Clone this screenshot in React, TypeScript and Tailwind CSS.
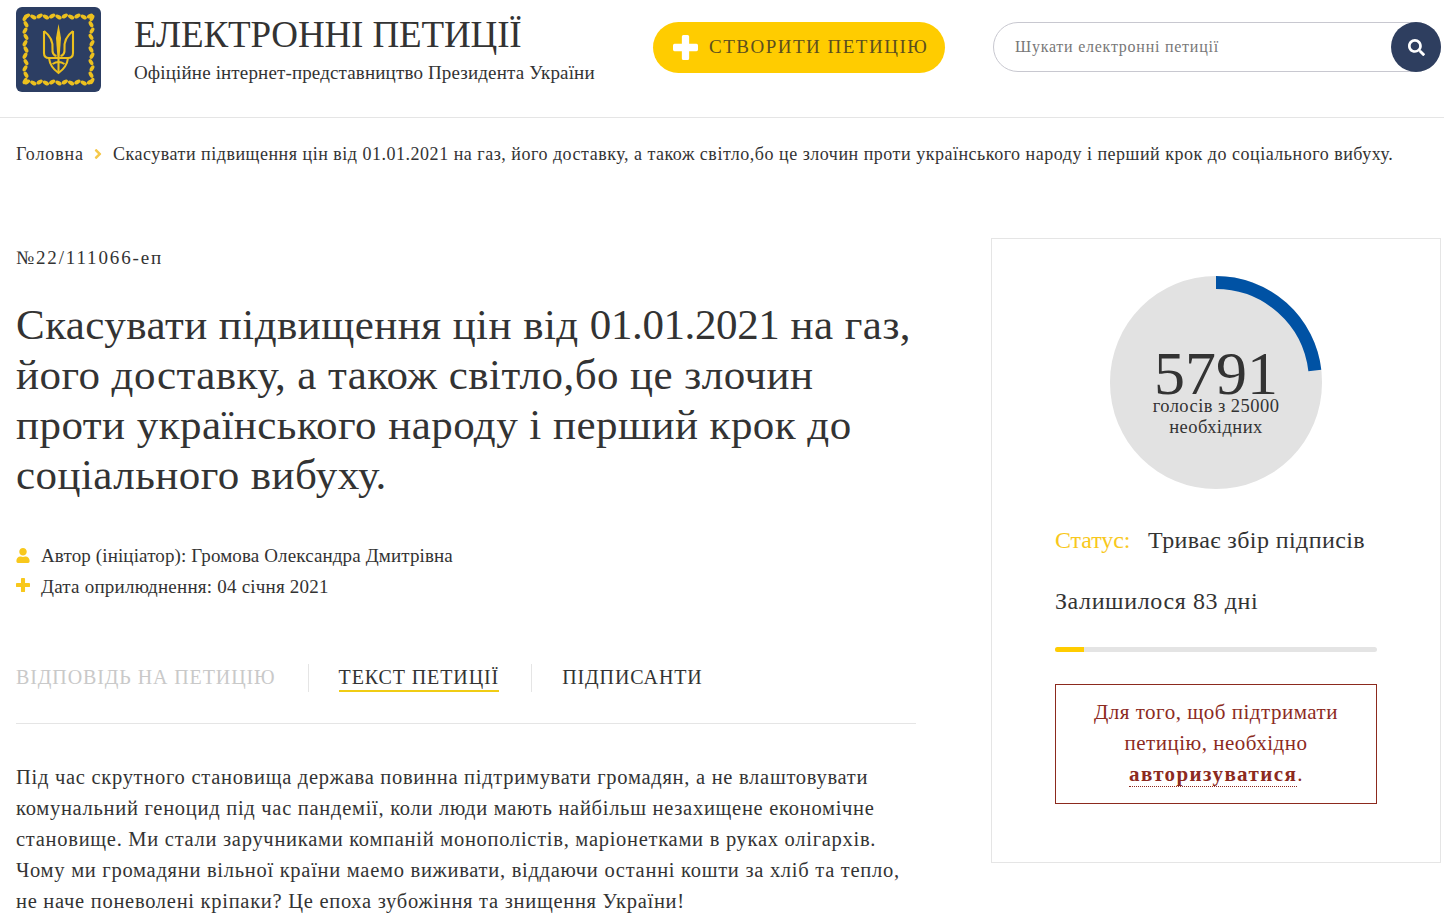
import { FaSearch, FaUser, FaAngleRight } from "react-icons/fa";

const serif = "font-['Liberation_Serif',serif]";

// leaves along the frame of the logo
const leaves: { x: number; y: number; r: number }[] = [];
for (let i = 0; i < 11; i++) {
  const p = 11 + i * 6.3;
  leaves.push({ x: p, y: 9 + (i % 2), r: i % 2 ? 30 : -30 });
  leaves.push({ x: p, y: 75 + (i % 2), r: i % 2 ? 30 : -30 });
  leaves.push({ x: 9 + (i % 2), y: p, r: i % 2 ? 60 : 120 });
  leaves.push({ x: 76 - (i % 2), y: p, r: i % 2 ? 60 : 120 });
}

function Logo() {
  return (
    <svg width="85" height="85" viewBox="0 0 85 85" className="shrink-0">
      <rect width="85" height="85" rx="6" fill="#2c3e63" />
      {leaves.map((l, i) => (
        <ellipse
          key={i}
          cx={l.x}
          cy={l.y}
          rx="3.4"
          ry="1.9"
          fill="#ecc01e"
          transform={`rotate(${l.r} ${l.x} ${l.y})`}
        />
      ))}
      <g fill="none" stroke="#ecc01e" strokeWidth="2.1">
        <path d="M28 24 V46 Q28 51 33 51 H52 Q57 51 57 46 V24" />
        <path d="M28 24 Q37.5 31 36.5 42 Q36 48 40.5 49" />
        <path d="M57 24 Q47.5 31 48.5 42 Q49 48 44.5 49" />
        <path d="M33 51 Q34 60 42.5 66 Q51 60 52 51" />
        <path d="M42.5 51 V65" />
        <path d="M36.5 57 Q42.5 53 48.5 57" />
      </g>
      <path d="M42.5 17 L45 31 L43.6 50 H41.4 L40 31 Z" fill="#ecc01e" />
    </svg>
  );
}

function PlusIcon({ className }: { className: string }) {
  return (
    <svg viewBox="0 0 24 24" className={className} fill="currentColor">
      <path d="M8.5 1.5 a1.5 1.5 0 0 1 1.5 -1.5 h4 a1.5 1.5 0 0 1 1.5 1.5 V8.5 H22.5 a1.5 1.5 0 0 1 1.5 1.5 v4 a1.5 1.5 0 0 1 -1.5 1.5 H15.5 V22.5 a1.5 1.5 0 0 1 -1.5 1.5 h-4 a1.5 1.5 0 0 1 -1.5 -1.5 V15.5 H1.5 a1.5 1.5 0 0 1 -1.5 -1.5 v-4 a1.5 1.5 0 0 1 1.5 -1.5 H8.5 Z" />
    </svg>
  );
}

function Arc() {
  // 5791 of 25000 votes
  const a = (5791 / 25000) * 2 * Math.PI;
  const r = 99.5;
  const x = 106 + r * Math.sin(a);
  const y = 106 - r * Math.cos(a);
  return (
    <svg width="212" height="212" className="absolute inset-0">
      <path
        d={`M106 6.5 A${r} ${r} 0 0 1 ${x} ${y}`}
        fill="none"
        stroke="#0052a4"
        strokeWidth="13"
      />
    </svg>
  );
}

export default function App() {
  return (
    <div className={`h-[922px] overflow-hidden bg-white text-[#333] ${serif}`}>
      <header className="flex h-[118px] items-start border-b border-[#e5e5e5] pl-4 pr-[3px] pt-[7px]">
        <Logo />
        <div className="ml-[33px] w-[519px] pt-[6px]">
          <h1 className="text-[37px] leading-[44px] tracking-[-0.13px] text-[#333]">ЕЛЕКТРОННІ ПЕТИЦІЇ</h1>
          <p className="mt-[4px] whitespace-nowrap text-[19px] leading-[24px] tracking-[0.15px]">
            Офіційне інтернет-представництво Президента України
          </p>
        </div>
        <a className="mt-[15px] flex h-[51px] w-[292px] items-center rounded-full bg-[#ffcc00] pl-5 text-[#5c4f1f]">
          <PlusIcon className="h-[25px] w-[25px] shrink-0 text-white" />
          <span className="ml-[11px] text-[19px] tracking-[1.5px]">СТВОРИТИ ПЕТИЦІЮ</span>
        </a>
        <div className="ml-[48px] mt-[15px] flex h-[50px] flex-1 items-center rounded-full border border-[#c8c8d0] pl-[21px]">
          <input
            placeholder="Шукати електронні петиції"
            className="min-w-0 flex-1 text-[16px] tracking-[0.75px] outline-none placeholder:text-[#777]"
          />
          <button className="-mr-px flex h-[50px] w-[50px] shrink-0 items-center justify-center rounded-full bg-[#2e3e5f] text-white">
            <FaSearch className="text-[17px]" />
          </button>
        </div>
      </header>

      <nav className="mt-[24px] flex items-center pl-4 text-[18px] leading-[24px] tracking-[0.51px] whitespace-nowrap">
        <span className="tracking-[0.9px]">Головна</span>
        <FaAngleRight className="ml-[6px] mr-[7px] text-[16px] text-[#f5c84a]" />
        <span>Скасувати підвищення цін від 01.01.2021 на газ, його доставку, а також світло,бо це злочин проти українського народу і перший крок до соціального вибуху.</span>
      </nav>

      <main className="mt-[72px] flex items-start justify-between pl-4 pr-[3px]">
        <section className="w-[900px]">
          <div className="mt-[8px] text-[19px] leading-[24px] tracking-[1.85px]">№22/111066-еп</div>
          <h2 className="mt-[30px] whitespace-nowrap text-[43px] leading-[50px] tracking-[0.45px]">
            Скасувати підвищення цін від <span className="tracking-[-0.4px]">01.01.2021</span> на газ,
            <br />
            його доставку, а також світло,бо це злочин
            <br />
            проти українського народу і перший крок до
            <br />
            соціального вибуху.
          </h2>
          <ul className="mt-[40px] text-[19px] leading-[31px] tracking-[0.13px]">
            <li className="flex items-center">
              <FaUser className="mr-[11px] h-[15px] w-[14px] text-[#f8c81c]" />
              Автор (ініціатор): Громова Олександра Дмитрівна
            </li>
            <li className="flex items-center tracking-[0.22px]">
              <PlusIcon className="mb-[3px] mr-[11px] h-[14px] w-[14px] text-[#f8c81c]" />
              Дата оприлюднення: 04 січня 2021
            </li>
          </ul>
          <div className="mt-[62px] flex border-b border-[#e5e5e5] pb-[31px] text-[20px] leading-[26px] tracking-[0.9px]">
            <div className="h-[28px] border-r border-[#e5e5e5] pr-[32px] text-[#c9c9c9]">ВІДПОВІДЬ НА ПЕТИЦІЮ</div>
            <div className="h-[28px] border-r border-[#e5e5e5] pl-[30px] pr-[32px]">
              <span className="block border-b-[2px] border-[#f0cc14]">ТЕКСТ ПЕТИЦІЇ</span>
            </div>
            <div className="h-[28px] pl-[30px]">ПІДПИСАНТИ</div>
          </div>
          <p className="mt-[38px] whitespace-nowrap text-[20.5px] leading-[31px] tracking-[0.72px]">
            Під час скрутного становища держава повинна підтримувати громадян, а не влаштовувати
            <br />
            комунальний геноцид під час пандемії, коли люди мають найбільш незахищене економічне
            <br />
            становище. Ми стали заручниками компаній монополістів, маріонетками в руках олігархів.
            <br />
            Чому ми громадяни вільної країни маемо виживати, віддаючи останні кошти за хліб та тепло,
            <br />
            не наче поневолені кріпаки? Це епоха зубожіння та знищення України!
          </p>
        </section>

        <aside className="flex h-[625px] w-[450px] flex-col items-center border border-[#e5e5e5] pt-[37px]">
          <div className="relative flex h-[213px] w-[212px] shrink-0 flex-col items-center rounded-full bg-[#e2e2e2] pt-[74px] text-center">
            <Arc />
            <div className="text-[62px] leading-[46px]">5791</div>
            <div className="text-[18.5px] leading-[21px] tracking-[0.45px]">
              голосів з 25000
              <br />
              необхідних
            </div>
          </div>
          <div className="w-[322px]">
            <div className="mt-[35px] flex whitespace-nowrap text-[24px] leading-[32px] tracking-[0.4px]">
              <span className="w-[93px] tracking-[-0.1px] text-[#f8c81c]">Статус:</span>
              <span>Триває збір підписів</span>
            </div>
            <div className="mt-[29px] text-[24px] leading-[32px] tracking-[0.6px]">Залишилося 83 дні</div>
            <div className="mt-[30px] h-[5px] overflow-hidden rounded-full bg-[#e4e4e4]">
              <div className="h-full w-[29px] bg-[#ffcc00]" />
            </div>
            <div className="mt-[32px] h-[120px] border border-[#8c2a1e] pt-[12px] text-center text-[21px] leading-[31px] tracking-[0.5px] text-[#8c2a1e]">
              Для того, щоб підтримати
              <br />
              петицію, необхідно
              <br />
              <span className="border-b border-dotted border-[#8c2a1e] font-bold leading-[20px] tracking-[1.4px]">авторизуватися</span>.
            </div>
          </div>
        </aside>
      </main>
    </div>
  );
}
